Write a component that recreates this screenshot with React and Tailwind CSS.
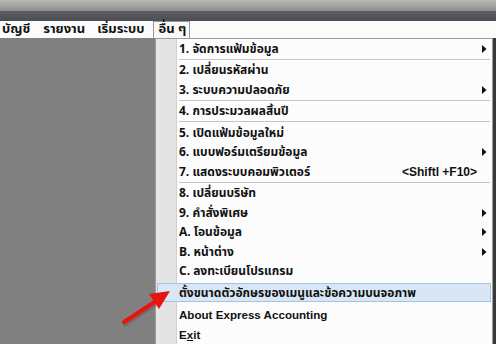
import React from "react";

const font = { fontFamily: "Tahoma, 'Noto Sans Thai', 'Noto Sans', 'DejaVu Sans', sans-serif" };
const latin = { fontFamily: "'Liberation Sans', Arial, sans-serif" };

function Arrow() {
  return (
    <svg width="5" height="8" viewBox="0 0 5 8" className="shrink-0">
      <path d="M0 0 L4.5 4 L0 8 Z" fill="#111" />
    </svg>
  );
}

function Row({ label, sub, shortcut }) {
  return (
    <div className="h-[19.5px] flex items-center pl-[23px] pr-[5px]">
      <span className="flex-1 whitespace-nowrap">{label}</span>
      {shortcut && (
        <span className="mr-[10px] whitespace-nowrap text-[12px]" style={latin}>
          {shortcut}
        </span>
      )}
      {sub && <Arrow />}
    </div>
  );
}

function Sep() {
  return (
    <div className="h-[2px] pl-[23px] pr-[2px] flex flex-col">
      <div className="h-px bg-[#c4c4c4]" />
      <div className="h-px bg-white" />
    </div>
  );
}

export default function App() {
  return (
    <div
      className="relative w-[496px] h-[344px] overflow-hidden bg-[#808080] text-[12px] font-bold text-[#111]"
      style={font}
    >
      <div className="h-[11px] bg-gradient-to-b from-[#b8b8b8] to-[#8e8e8e]" />
      <div className="h-[10px] bg-gradient-to-b from-[#5c6064] to-[#4a4e52]" />
      <div className="h-[17px] bg-[#fbfbfb] flex items-center text-[13px]">
        <span className="ml-[2px]">บัญชี</span>
        <span className="ml-[13px]">รายงาน</span>
        <span className="ml-[12px]">เริ่มระบบ</span>
        <span className="ml-[8px] h-[17px] pl-[5px] pr-[3px] flex items-center border-l border-t border-r border-[#9a9a9a] bg-[#f8f8f8]">
          อื่น ๆ
        </span>
      </div>

      <div className="absolute left-[155px] top-[38px] w-[338px] h-[320px] bg-[#fcfcfc] border border-[#9c9c9c] shadow-[3px_0_0_#3a3a3a]">
        <div className="absolute left-0 top-0 bottom-0 w-[21px] bg-[#e4e4e4] border-r border-[#d0d0d0]" />
        <div className="relative">
          <Row label="1. จัดการแฟ้มข้อมูล" sub />
          <Sep />
          <Row label="2. เปลี่ยนรหัสผ่าน" />
          <Row label="3. ระบบความปลอดภัย" sub />
          <Sep />
          <Row label="4. การประมวลผลสิ้นปี" />
          <Sep />
          <Row label="5. เปิดแฟ้มข้อมูลใหม่" />
          <Row label="6. แบบฟอร์มเตรียมข้อมูล" sub />
          <Row label="7. แสดงระบบคอมพิวเตอร์" shortcut="<Shiftl +F10>" />
          <Sep />
          <Row label="8. เปลี่ยนบริษัท" />
          <Row label="9. คำสั่งพิเศษ" sub />
          <Row label="A. โอนข้อมูล" sub />
          <Row label="B. หน้าต่าง" sub />
          <Row label="C. ลงทะเบียนโปรแกรม" />
          <div className="mt-[2px] mx-[1px] h-[19px] flex items-center pl-[21px] bg-[#d8e6f5] border border-[#a4c2e2]">
            <span className="whitespace-nowrap">ตั้งขนาดตัวอักษรของเมนูและข้อความบนจอภาพ</span>
          </div>
          <div className="h-[3px]" />
          <div className="h-[19.5px] flex items-center pl-[23px] text-[11.6px]" style={latin}>
            About Express Accounting
          </div>
          <div className="h-[19.5px] flex items-center pl-[23px] text-[11.6px]" style={latin}>
            <span>
              E<span className="underline">x</span>it
            </span>
          </div>
        </div>
      </div>

      <svg className="absolute left-[118px] top-[283px]" width="60" height="45" viewBox="0 0 60 45">
        <line x1="6" y1="39" x2="38" y2="18" stroke="#8a2a2a" strokeOpacity="0.35" strokeWidth="4.5" strokeLinecap="round" transform="translate(1,2)" />
        <line x1="6" y1="39" x2="38" y2="18" stroke="#e8150f" strokeWidth="4" strokeLinecap="round" />
        <path d="M52 8 L31 11 L41 26 Z" fill="#e8150f" />
      </svg>
    </div>
  );
}
